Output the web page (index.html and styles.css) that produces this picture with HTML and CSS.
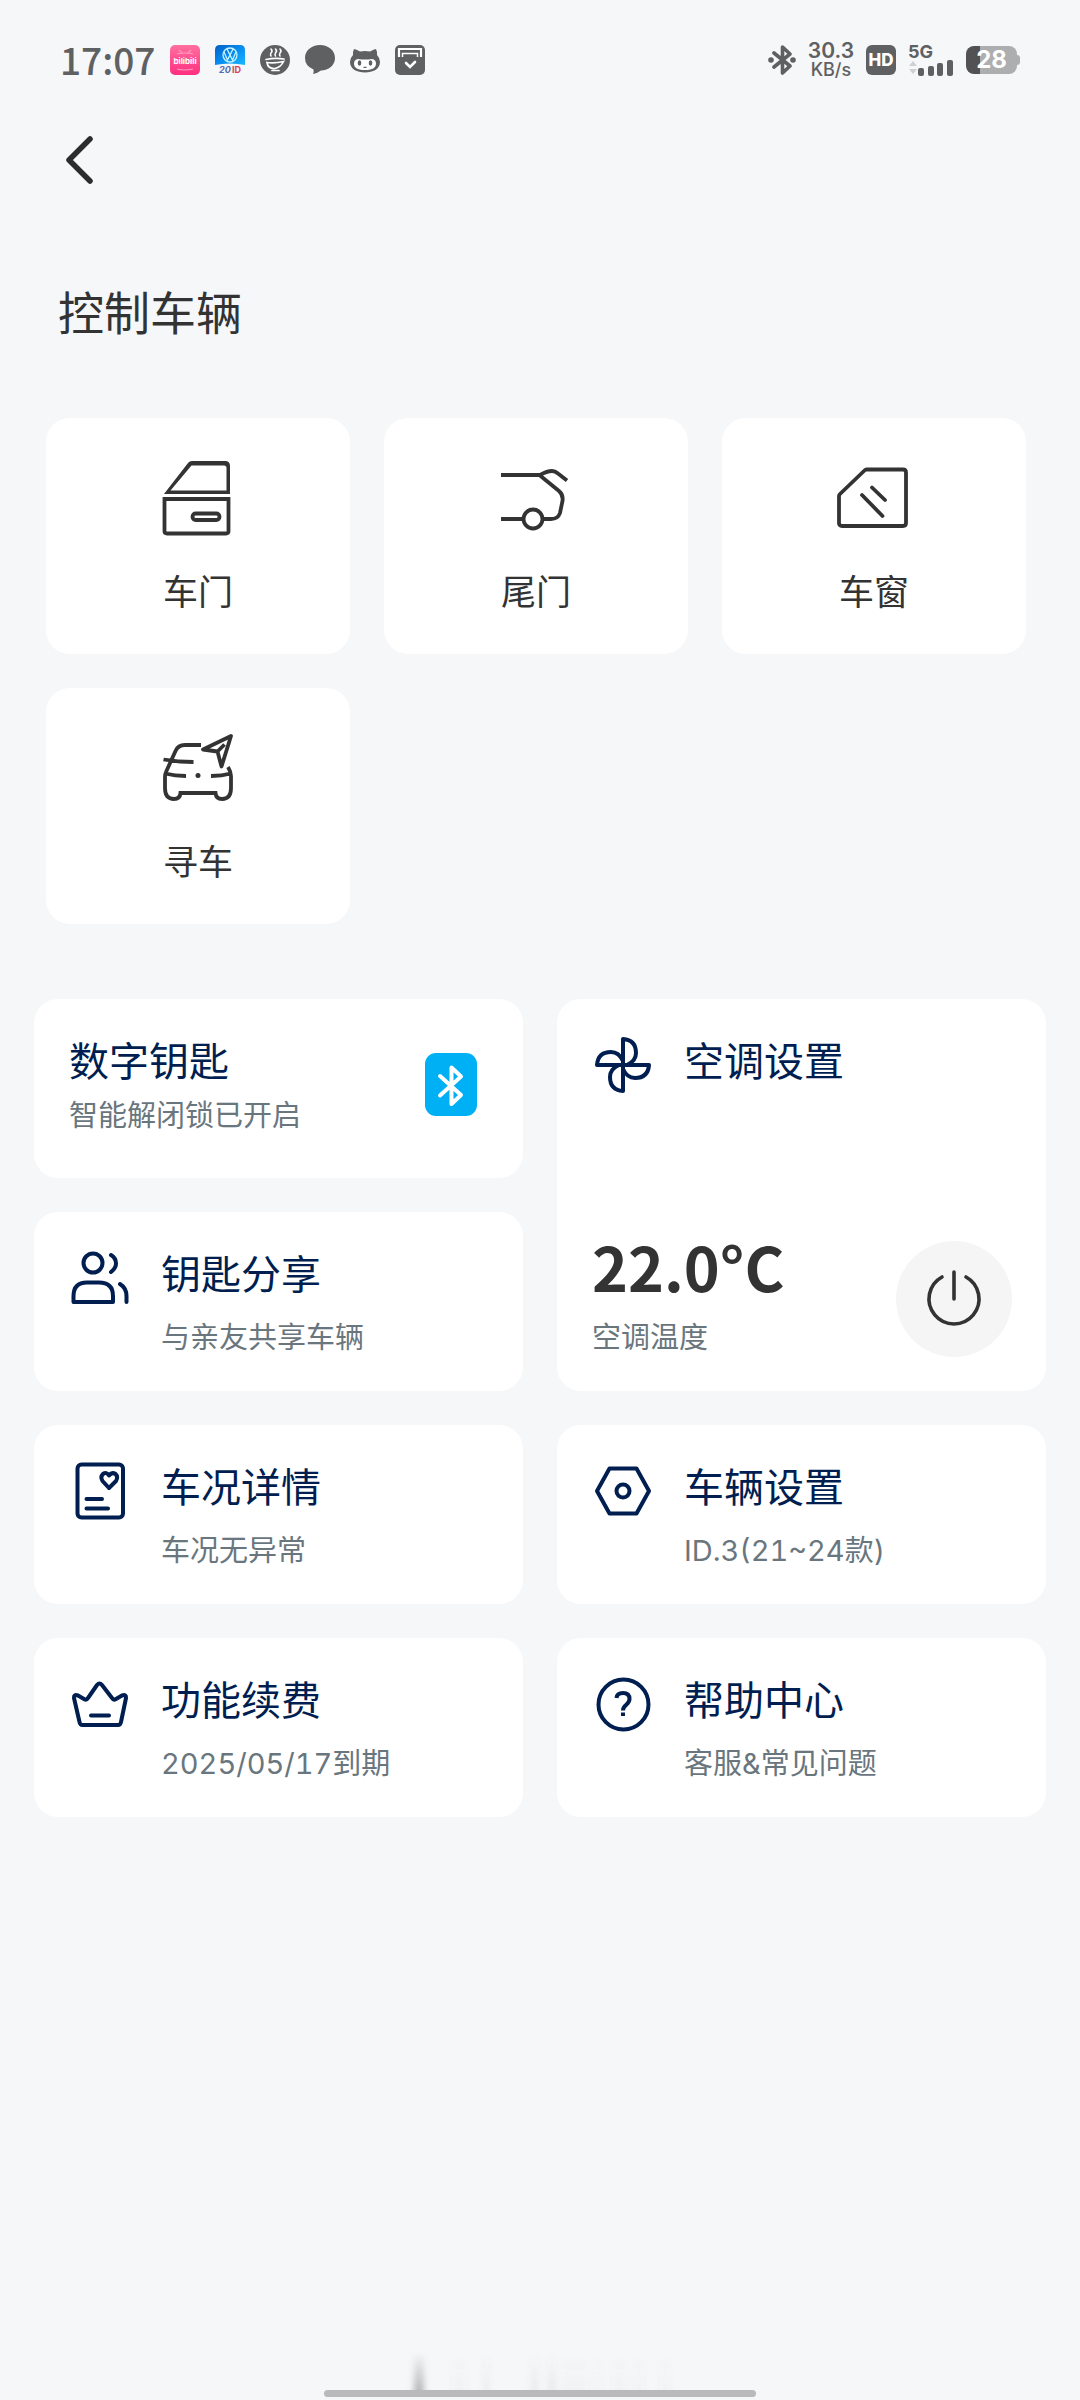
FILE: index.html
```html
<!DOCTYPE html>
<html lang="zh-CN">
<head>
<meta charset="utf-8">
<meta name="viewport" content="width=device-width, initial-scale=1">
<title>控制车辆</title>
<link rel="stylesheet" href="styles.css">
</head>
<body>
<div class="screen">
  <header class="status">
    <div class="status-group">
      <time class="clock">17:07</time>
      <svg class="app-icon" viewBox="0 0 30 30" aria-hidden="true">
        <defs><linearGradient id="pink" x1="0" y1="0" x2="0" y2="1"><stop offset="0" stop-color="#ff6f9f"/><stop offset="1" stop-color="#ff2e80"/></linearGradient></defs>
        <rect width="30" height="30" rx="5" fill="url(#pink)"/>
        <path d="M9 5l3 3M21 5l-3 3M7 9q8-2 16 0M7 24q8 2 16 0" fill="none" stroke="#ff9dbf" stroke-width="1.2"/>
        <text class="app-logo-text" x="15" y="19" text-anchor="middle" fill="#fff">bilibili</text>
      </svg>
      <svg class="app-icon" viewBox="0 0 30 30" aria-hidden="true">
        <defs><linearGradient id="blue" x1="0" y1="0" x2="1" y2="1"><stop offset="0" stop-color="#005fc4"/><stop offset=".5" stop-color="#078cf0"/><stop offset="1" stop-color="#19b8ff"/></linearGradient></defs>
        <path d="M5 0H25Q30 0 30 5V20Q15 17 0 20V5Q0 0 5 0Z" fill="url(#blue)"/>
        <circle cx="15" cy="10" r="7" fill="none" stroke="#c9f4ff" stroke-width="1.3"/>
        <path d="M12 4L15 10L18 4M9 7L12.500 15L15 10L17.500 15L21 7" fill="none" stroke="#c9f4ff" stroke-width="1.3"/>
        <text class="app-mini-text" x="4" y="28" fill="#5568b8" font-style="italic">20</text>
        <text class="app-mini-text" x="17" y="28" fill="#d8405c">ID</text>
      </svg>
      <svg class="app-icon" viewBox="0 0 30 30" aria-hidden="true">
        <circle cx="15" cy="15" r="15" fill="#5f6062"/>
        <path d="M11 4q2 2 0 4q-1 2 0 3M15.500 4q2 2 0 4q-1 2 0 3M20 4q2 2 0 4q-1 2 0 3" fill="none" stroke="#fff" stroke-width="1.6" stroke-linecap="round"/>
        <path d="M6 14.500q9-2 18-.5M7 17.500Q8 24 15 23.500Q21 22 23.500 16.500Q15 18.500 7 17.500ZM12 25.500h7" fill="none" stroke="#fff" stroke-width="1.7" stroke-linecap="round"/>
      </svg>
      <svg class="app-icon" viewBox="0 0 30 30" aria-hidden="true">
        <path d="M15 0C23.500 0 30 5.500 30 13S23.500 25.500 16 25.500Q12 28.500 8 29Q9 26.500 8.500 24.500Q0 21 0 13C0 5.500 6.500 0 15 0Z" fill="#5f6062"/>
      </svg>
      <svg class="app-icon" viewBox="0 0 30 30" aria-hidden="true">
        <path d="M4 4Q6 4 10 6.500Q15 5.500 20 6.500Q24 4 26 4Q27.500 7 27 10Q30 13 30 17C30 24 23 27.500 15 27.500S0 24 0 17Q0 13 3 10Q2.500 7 4 4Z" fill="#5f6062"/>
        <path d="M8 14Q15 15 22 14Q26 14.500 26 18.500C26 23.500 21 25 15 25S4 23.500 4 18.500Q4 14.500 8 14Z" fill="#fff"/>
        <ellipse cx="9.500" cy="18" rx="1.800" ry="2.800" fill="#5f6062"/><ellipse cx="20.500" cy="18" rx="1.800" ry="2.800" fill="#5f6062"/>
        <path d="M13.500 22q1.500 1 3 0" fill="none" stroke="#5f6062" stroke-width="1.2"/>
      </svg>
      <svg class="app-icon" viewBox="0 0 30 30" aria-hidden="true">
        <rect width="30" height="30" rx="5" fill="#5f6062"/>
        <path d="M4 12V4H26V12" fill="none" stroke="#fff" stroke-width="2.200"/>
        <path d="M7.500 12V8.500H22.500V12" fill="none" stroke="#fff" stroke-width="1.500"/>
        <path d="M11 18L15 22L20 17" fill="none" stroke="#fff" stroke-width="2.600" stroke-linecap="round"/>
      </svg>
    </div>
    <div class="status-group status-right">
      <svg class="bt" viewBox="0 0 28 30" aria-hidden="true">
        <path d="M6 8L22 21L14.500 28V2L22 9L6 22" fill="none" stroke="#5f6062" stroke-width="3.600" stroke-linecap="round" stroke-linejoin="round"/>
        <circle cx="3" cy="15" r="2.800" fill="#5f6062"/><circle cx="25" cy="15" r="2.800" fill="#5f6062"/>
      </svg>
      <div class="net"><span>30.3</span><span class="unit">KB/s</span></div>
      <div class="hd">HD</div>
      <div class="cell">
        <span class="gen">5G</span>
        <svg class="bars" viewBox="0 0 46 17" aria-hidden="true">
          <path d="M1 7L5 2L9 7ZM1 10H9L5 15Z" fill="#cfd0d2"/>
          <g fill="#5f6062"><rect x="10" y="9" width="6" height="8" rx="2"/><rect x="20" y="7" width="6" height="10" rx="2"/><rect x="29" y="4" width="6" height="13" rx="2"/><rect x="39" y="1" width="6" height="16" rx="2"/></g>
        </svg>
      </div>
      <div class="battery"><span class="level">28</span></div>
    </div>
  </header>

  <nav class="nav">
    <button class="back" type="button" aria-label="返回">
      <svg viewBox="0 0 34 52" aria-hidden="true"><path d="M28 5L7 26L28 47" fill="none" stroke="#2c2c2e" stroke-width="5.500" stroke-linecap="round" stroke-linejoin="round"/></svg>
    </button>
  </nav>

  <main>
    <h1 class="title">控制车辆</h1>

    <section class="tiles">
      <button class="tile" type="button">
        <svg class="tile-icon" viewBox="0 0 76 76" aria-hidden="true">
          <path d="M4 34L28 3Q29.500 1 32 1H65Q70 1 70 6V34ZM10.500 30.500H66.500V8Q66.500 5.500 64 5.500H31.500Z" fill="#333" fill-rule="evenodd"/>
          <path d="M4.500 39H68.500V71Q68.500 73.500 66 73.500H7Q4.500 73.500 4.500 71Z"/>
          <rect x="32.500" y="53.500" width="27" height="6.500" rx="3.200"/>
        </svg>
        <span>车门</span>
      </button>
      <button class="tile" type="button">
        <svg class="tile-icon" viewBox="0 0 76 76" aria-hidden="true">
          <path d="M3 15H42Q49 11 54 11Q57 11 60 13.500L69 20.500M42 15.500L61 31Q65.500 35 64.500 41L62 53Q60 59 53 59H46M3 59H25"/>
          <circle cx="35" cy="59" r="9.500"/>
        </svg>
        <span>尾门</span>
      </button>
      <button class="tile" type="button">
        <svg class="tile-icon" viewBox="0 0 76 76" aria-hidden="true">
          <path d="M30.500 9.500H67Q70 9.500 70 12.500V63Q70 66 67 66H6Q3 66 3 63V36Q3 35 4 34L28.500 10.500Q29.500 9.500 30.500 9.500ZM26 35L46.500 56M36 27.500L49 40" stroke-linecap="round"/>
        </svg>
        <span>车窗</span>
      </button>
      <button class="tile" type="button">
        <svg class="tile-icon" viewBox="0 0 76 76" aria-hidden="true">
          <path d="M41 15H25Q18 15 15.500 21L6 42Q5 44 5 47V58Q5 69 14 69Q20 69 20.500 63H55.500Q56 69 62 69Q71 69 71 58V46Q71 42 68 37M3.500 29.500Q18 32 33.500 32M5 43.500Q15 46 26 46M51 46Q62 46 71 43.500"/>
          <path d="M71 6L43 19.500L57.500 21.500L61.500 36.500ZM57.500 21.500L64.500 14.500" stroke-linejoin="round"/>
          <circle cx="38" cy="45.500" r="2.500" fill="#333" stroke="none"/>
        </svg>
        <span>寻车</span>
      </button>
    </section>

    <section class="cards">
      <a class="card key" href="#key">
        <span class="copy">
          <span class="name">数字钥匙</span>
          <span class="note">智能解闭锁已开启</span>
        </span>
        <span class="bt-badge">
          <svg viewBox="0 0 52 63" aria-hidden="true"><path d="M15 23L36 42L26.500 51V14.500L36 23.500L15 42.500" fill="none" stroke="#fff" stroke-width="4" stroke-linecap="round" stroke-linejoin="round"/></svg>
        </span>
      </a>

      <article class="card climate">
        <a class="climate-head" href="#climate">
          <svg class="icon" viewBox="0 0 64 64" aria-hidden="true">
            <path d="M32 32V6Q45 7 45 20Q45 28 36 32M32 32H58Q57 45 44 45Q36 45 32 36M32 32V58Q19 57 19 44Q19 36 28 32M32 32H6Q7 19 20 19Q28 19 32 28"/>
          </svg>
          <span class="name">空调设置</span>
        </a>
        <div class="climate-body">
          <div class="copy">
            <strong class="temp">22.0°C</strong>
            <span class="note">空调温度</span>
          </div>
          <button class="power" type="button" aria-label="空调开关">
            <svg viewBox="0 0 64 64" aria-hidden="true"><path d="M20 10A25 25 0 1 0 44 10M32 5V32" fill="none" stroke="#333" stroke-width="3.600" stroke-linecap="round"/></svg>
          </button>
        </div>
      </article>

      <a class="card" href="#share">
        <svg class="icon" viewBox="0 0 64 64" aria-hidden="true">
          <circle cx="25" cy="17" r="9.500"/>
          <path d="M5.500 56V50Q5.500 36.500 19 36.500H31Q45 36.500 45 50V56ZM43 9Q48 12 48 17.500Q48 22 43 26M52 38Q58.500 42 58.500 50V56" stroke-linecap="round"/>
        </svg>
        <span class="copy"><span class="name">钥匙分享</span><span class="note">与亲友共享车辆</span></span>
      </a>

      <a class="card" href="#condition">
        <svg class="icon" viewBox="0 0 64 64" aria-hidden="true">
          <rect x="9.500" y="5.500" width="45.500" height="53" rx="4"/>
          <path d="M41 29L34.500 22Q32 18 35 15Q38.500 12.500 41 16.500Q44 12.500 47.500 15Q50.500 18 48 22ZM18.500 40H34M18.500 49.500H40" stroke-linecap="round"/>
        </svg>
        <span class="copy"><span class="name">车况详情</span><span class="note">车况无异常</span></span>
      </a>

      <a class="card" href="#settings">
        <svg class="icon" viewBox="0 0 64 64" aria-hidden="true">
          <path d="M18.500 9.500H45.500L58 32L45.500 54.500H18.500L6 32Z"/>
          <circle cx="32" cy="32" r="6.500"/>
        </svg>
        <span class="copy"><span class="name">车辆设置</span><span class="note">ID.3(21~24款)</span></span>
      </a>

      <a class="card" href="#renew">
        <svg class="icon" viewBox="0 0 64 64" aria-hidden="true">
          <path d="M29 13Q31.500 10 34 13L44 26Q45.500 28.500 48 27L54 23.500Q58.500 22 58 26L53 50Q52.500 53 50 53H14.500Q12 53 11.500 50L6 26Q5.500 22 10 23.500L16 27Q18.500 28.500 20 26ZM23 43.500H41" stroke-linecap="round"/>
        </svg>
        <span class="copy"><span class="name">功能续费</span><span class="note">2025/05/17到期</span></span>
      </a>

      <a class="card" href="#help">
        <svg class="icon" viewBox="0 0 64 64" aria-hidden="true">
          <circle cx="32.500" cy="32.500" r="25"/>
          <path d="M25.500 26Q26 21 32 21Q38.500 21 38.500 27Q38.500 30 35 33Q32 35.500 32 38.500"/>
          <path d="M32 40.500V44" stroke-width="4"/>
        </svg>
        <span class="copy"><span class="name">帮助中心</span><span class="note">客服&amp;常见问题</span></span>
      </a>
    </section>
  </main>

  <footer class="home">
    <svg class="shade" viewBox="0 0 280 38" aria-hidden="true">
      <defs>
        <linearGradient id="fade" x1="0" y1="0" x2="0" y2="1"><stop offset="0" stop-color="#777" stop-opacity="0"/><stop offset="1" stop-color="#777" stop-opacity=".5"/></linearGradient>
        <filter id="soft" x="-20%" y="0" width="140%" height="100%"><feGaussianBlur stdDeviation="3 0"/></filter>
      </defs>
      <g fill="url(#fade)" filter="url(#soft)">
        <rect x="14" y="0" width="10" height="38"/>
        <g opacity=".2"><rect x="84" y="0" width="5" height="38"/><rect x="131" y="0" width="7" height="38"/><rect x="148" y="0" width="8" height="38"/></g>
        <g opacity=".07"><rect x="52" y="0" width="14" height="38"/><rect x="162" y="0" width="26" height="38"/><rect x="194" y="0" width="8" height="38"/><rect x="212" y="0" width="14" height="38"/><rect x="234" y="0" width="10" height="38"/><rect x="260" y="0" width="10" height="38"/></g>
      </g>
    </svg>
    <div class="home-bar"></div>
  </footer>
</div>
</body>
</html>
```
FILE: styles.css
```css
* {
  box-sizing: border-box;
}

body {
  margin: 0;
  background: #f5f7f9;
  color: #333;
  font-family: Inter, "Noto Sans CJK SC", sans-serif;
}

button {
  border: 0;
  padding: 0;
  background: none;
  color: inherit;
  font: inherit;
}

a {
  color: inherit;
  text-decoration: none;
}

svg {
  display: block;
  flex: none;
}

.screen {
  display: flex;
  flex-direction: column;
  min-height: 100vh;
}

/* Status bar */

.status {
  display: flex;
  align-items: center;
  justify-content: space-between;
  height: 120px;
  padding: 0 63px 0 60px;
  color: #5f6062;
}

.status-group {
  display: flex;
  align-items: center;
  gap: 15px;
}

.status-right {
  gap: 12px;
}

.clock {
  padding-bottom: 2px;
  font-family: "Noto Sans CJK SC", sans-serif;
  font-size: 37px;
  font-weight: 500;
  line-height: 40px;
}

.app-icon {
  width: 30px;
  height: 30px;
}

.app-logo-text {
  font-size: 8px;
  font-weight: 700;
}

.app-mini-text {
  font-size: 9px;
  font-weight: 700;
}

.bt {
  width: 28px;
  height: 30px;
}

.net {
  display: flex;
  flex-direction: column;
  align-items: center;
  font-size: 21px;
  font-weight: 600;
  line-height: 20px;
}

.unit {
  font-size: 18px;
  font-weight: 500;
  line-height: 18px;
}

.hd {
  width: 30px;
  border-radius: 6px;
  background: #5f6062;
  color: #fff;
  font-size: 17px;
  font-weight: 800;
  line-height: 30px;
  text-align: center;
}

.cell {
  display: flex;
  flex-direction: column;
  width: 46px;
}

.gen {
  font-size: 18px;
  font-weight: 700;
  line-height: 14px;
}

.bars {
  width: 46px;
  height: 17px;
}

.battery {
  position: relative;
  width: 51px;
  border-radius: 8px;
  background: linear-gradient(90deg, #525254 28%, #adaeb0 28%);
  color: #fff;
  font-size: 24px;
  font-weight: 700;
  line-height: 28px;
  text-align: center;
}

.battery::after {
  content: "";
  position: absolute;
  top: 9px;
  left: 51px;
  width: 3px;
  height: 10px;
  border-radius: 0 3px 3px 0;
  background: #adaeb0;
}

/* Navigation and heading */

.nav {
  padding: 0 62px;
}

.back {
  display: flex;
  align-items: center;
  width: 80px;
  height: 80px;
}

.back svg {
  width: 34px;
  height: 52px;
}

.title {
  margin: 0;
  padding: 80px 58px 72px;
  font-size: 46px;
  font-weight: 400;
  line-height: 66px;
}

/* Quick control tiles */

.tiles {
  display: grid;
  grid-template-columns: repeat(3, 1fr);
  gap: 34px;
  padding: 0 54px 0 46px;
}

.tile {
  display: flex;
  flex-direction: column;
  align-items: center;
  gap: 32px;
  padding: 42px 0 38px;
  border-radius: 24px;
  background: #fff;
  font-size: 35px;
  line-height: 48px;
}

.tile-icon {
  width: 76px;
  height: 76px;
  fill: none;
  stroke: #333;
  stroke-width: 3.8px;
}

.tile-icon path[fill] {
  stroke: none;
}

/* Feature cards */

.cards {
  display: grid;
  grid-template-columns: repeat(2, 1fr);
  grid-auto-rows: 1fr;
  gap: 34px;
  padding: 75px 34px 0;
}

.card {
  display: flex;
  align-items: flex-start;
  gap: 29px;
  padding: 34px;
  border-radius: 24px;
  background: #fff;
}

.icon {
  width: 64px;
  height: 64px;
  fill: none;
  stroke: #001e50;
  stroke-width: 4px;
  stroke-linejoin: round;
}

.copy {
  display: flex;
  flex-direction: column;
  gap: 15px;
}

.name {
  color: #001e50;
  font-size: 40px;
  line-height: 58px;
}

.note {
  color: #6a767d;
  font-size: 29px;
  font-variant-numeric: tabular-nums;
  line-height: 38px;
}

.key {
  justify-content: space-between;
  padding-right: 46px;
  padding-left: 35px;
}

.key .copy {
  gap: 6px;
}

.bt-badge {
  border-radius: 11px;
  margin-top: 20px;
  background: #00b0f5;
}

.bt-badge svg {
  width: 52px;
  height: 63px;
}

.climate {
  grid-row: span 2;
  flex-direction: column;
  align-items: stretch;
  justify-content: space-between;
}

.climate-head {
  display: flex;
  gap: 29px;
}

.climate-body {
  display: flex;
  align-items: flex-end;
  justify-content: space-between;
}

.climate-body .copy {
  padding-left: 1px;
}

.temp {
  font-family: "Noto Sans CJK SC", sans-serif;
  font-size: 61px;
  font-weight: 700;
  line-height: 76px;
}

.power {
  display: flex;
  align-items: center;
  justify-content: center;
  width: 116px;
  height: 116px;
  border-radius: 50%;
  background: #f5f5f5;
}

.power svg {
  width: 64px;
  height: 64px;
}

/* Gesture bar */

.home {
  display: flex;
  flex-direction: column;
  align-items: center;
  margin-top: auto;
  padding: 40px 0 3px;
}

.shade {
  width: 280px;
  height: 38px;
}

.home-bar {
  width: 40%;
  height: 7px;
  border-radius: 4px;
  background: #bababc;
}
```
